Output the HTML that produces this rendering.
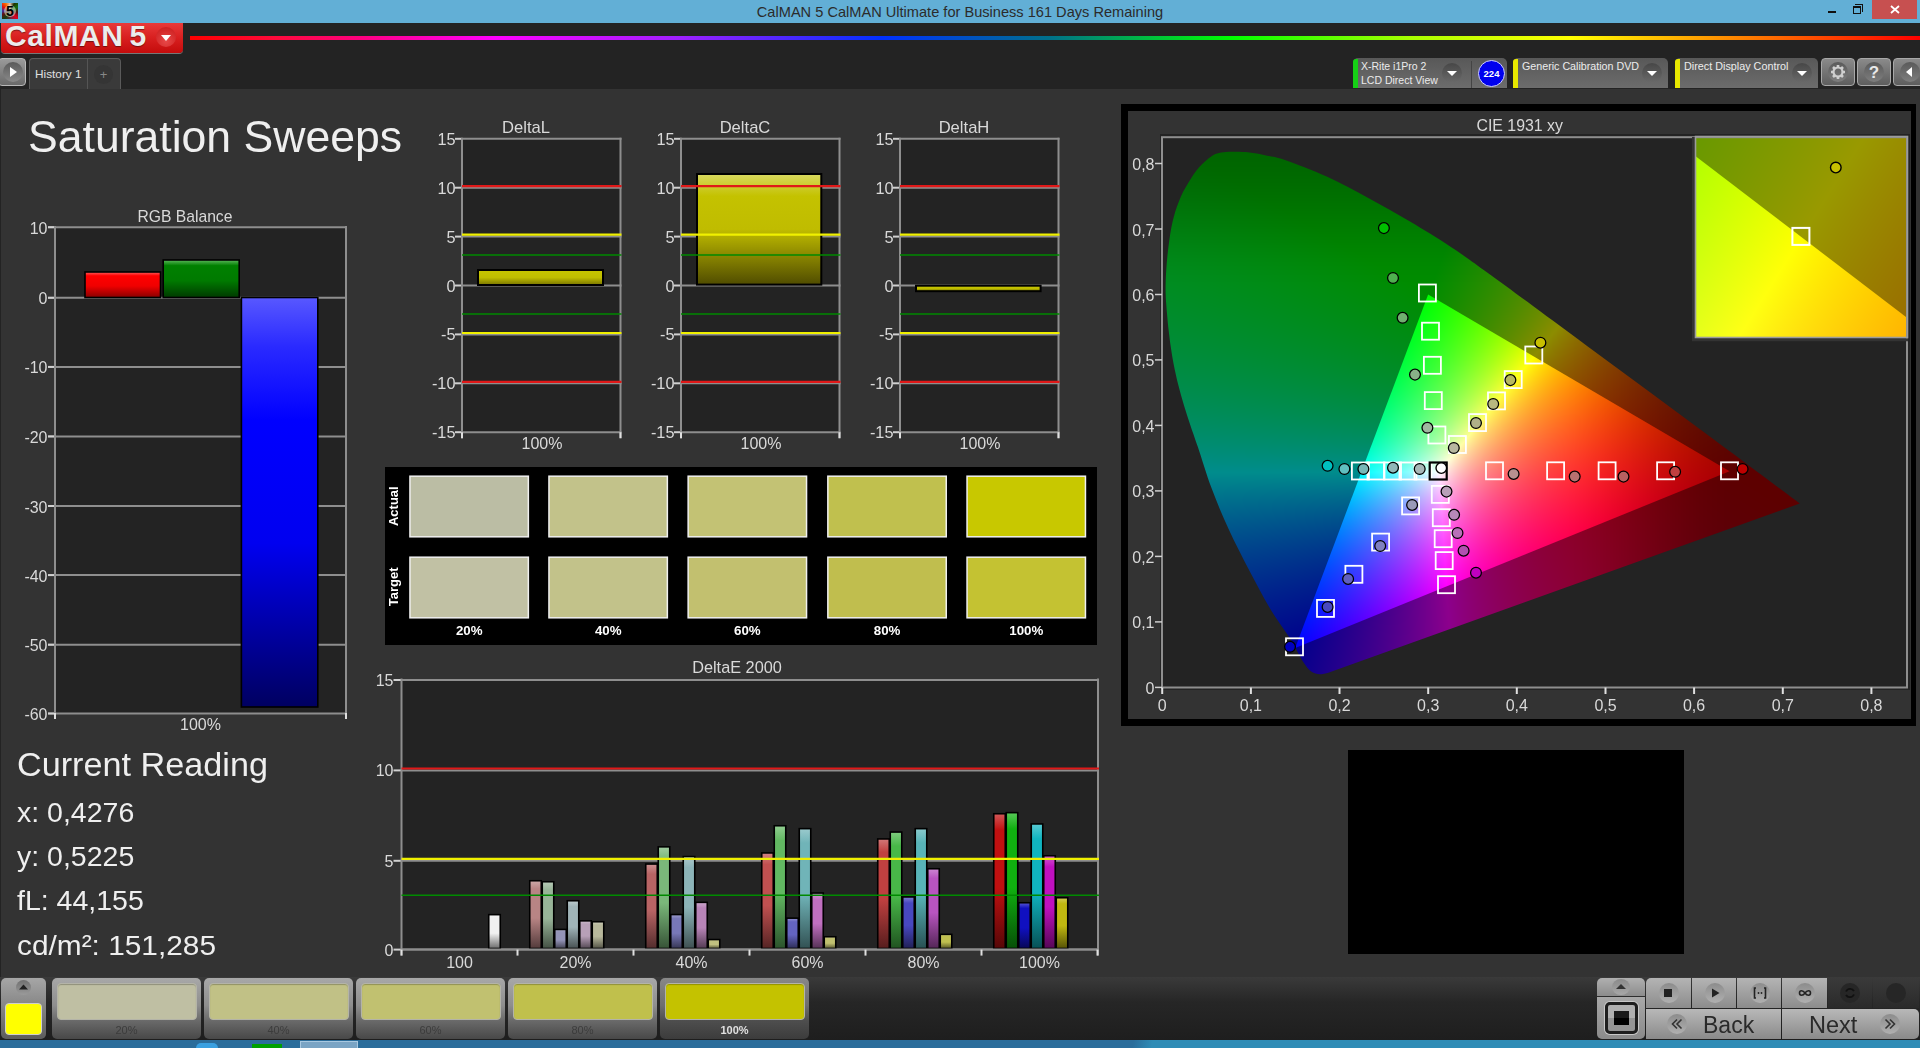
<!DOCTYPE html>
<html><head><meta charset="utf-8"><title>CalMAN 5</title><style>
html,body{margin:0;padding:0;width:1920px;height:1048px;overflow:hidden;background:#333333;font-family:"Liberation Sans",sans-serif;}
.a{position:absolute;box-sizing:border-box;}
svg text{font-family:"Liberation Sans",sans-serif;}
</style></head>
<body>
<div class="a" style="left:0;top:0;width:1920px;height:23px;background:#62afd6"></div>
<div class="a" style="left:2px;top:3px;width:16px;height:16px;background:conic-gradient(#e8c0b0 0deg,#203000 30deg,#107010 60deg,#501010 100deg,#e00020 135deg,#802040 170deg,#104010 215deg,#601010 245deg,#4030a0 270deg,#e01010 300deg,#ff7000 330deg,#e8c0b0 360deg)"></div>
<div class="a" style="left:4px;top:5px;width:12px;height:12px;border-radius:50%;background:rgba(220,240,210,.55)"></div>
<div class="a" style="left:2px;top:2px;width:16px;height:18px;font:bold 14px/18px 'Liberation Sans',sans-serif;color:#000;text-align:center">5</div>
<div class="a" style="left:0;top:0;width:1920px;height:23px;text-align:center;font-size:14.6px;line-height:24px;color:#2b2b2b;padding-left:0px;white-space:nowrap"><span style="position:relative;left:0px">CalMAN 5 CalMAN Ultimate for Business 161 Days Remaining</span></div>
<div class="a" style="left:1828px;top:11px;width:8px;height:2px;background:#111"></div>
<div class="a" style="left:1853px;top:6px;width:8px;height:8px;border:1px solid #111;border-top-width:2px"></div>
<div class="a" style="left:1855px;top:4px;width:8px;height:8px;border-top:1px solid #111;border-right:1px solid #111"></div>
<div class="a" style="left:1872px;top:0;width:45px;height:19px;background:#c75050"></div>
<svg class="a" style="left:1872px;top:0" width="45" height="19"><path d="M19 6 L27 13 M27 6 L19 13" stroke="#fff" stroke-width="1.8"/></svg>
<div class="a" style="left:0;top:23px;width:1920px;height:66px;background:#232323"></div>
<div class="a" style="left:0;top:89px;width:1px;height:888px;background:#232323"></div>
<div class="a" style="left:190px;top:36px;width:1730px;height:4px;background:linear-gradient(90deg,#ff0000 0%,#ff0a3c 5%,#ff0080 9.9%,#ff00ff 17.7%,#a020ff 28.2%,#2a2aff 37%,#0030ff 40%,#00708a 49.7%,#00ff00 60.2%,#a8ff00 70.6%,#ffff00 79.8%,#ff8a00 89%,#ff0000 100%)"></div>
<div class="a" style="left:1px;top:23px;width:182px;height:30px;border-radius:0 0 4px 4px;background:linear-gradient(#e83a3a,#d81f1f 50%,#c40c0c);box-shadow:0 1px 0 #777"></div>
<div class="a" style="left:5px;top:19px;width:150px;height:34px;font:bold 30px/34px 'Liberation Sans',sans-serif;color:#ececec;white-space:nowrap;letter-spacing:0.6px;text-shadow:0 1px 1px rgba(0,0,0,.45)">CalMAN<span style="margin-left:6px">5</span></div>
<div class="a" style="left:156px;top:27px;width:20px;height:20px;border-radius:50%;background:radial-gradient(circle at 50% 70%,#e84848,#c81818)"></div>
<svg class="a" style="left:156px;top:27px" width="20" height="20"><path d="M5 8 L15 8 L10 14 Z" fill="#fff"/></svg>
<div class="a" style="left:-2px;top:58px;width:28px;height:28px;border-radius:4px;background:linear-gradient(#9a9a9a,#6a6a6a);border:1px solid #b8b8b8"></div>
<div class="a" style="left:3px;top:62px;width:20px;height:20px;border-radius:50%;background:linear-gradient(#5a5a5a,#8a8a8a)"></div>
<svg class="a" style="left:3px;top:62px" width="20" height="20"><path d="M7 5 L14 10 L7 15 Z" fill="#fff"/></svg>
<div class="a" style="left:29px;top:58px;width:92px;height:31px;border-radius:4px 4px 0 0;background:#3a3a3a;border:1px solid #5a5a5a;border-bottom:none"></div>
<div class="a" style="left:87px;top:59px;width:1px;height:30px;background:#555"></div>
<div class="a" style="left:35px;top:66px;font-size:11.8px;line-height:16px;color:#e0e0e0;white-space:nowrap">History 1</div>
<div class="a" style="left:94px;top:65px;width:19px;height:19px;border-radius:50%;background:#353535"></div>
<div class="a" style="left:94px;top:65px;width:19px;height:19px;font-size:13px;line-height:20px;text-align:center;color:#888">+</div>
<div class="a" style="left:1353px;top:58px;width:154px;height:30px;border-radius:5px 5px 0 0;background:linear-gradient(#585858,#6c6c6c)"></div>
<div class="a" style="left:1353px;top:59px;width:5px;height:29px;border-radius:3px 0 0 0;background:#16d016"></div>
<div class="a" style="left:1361px;top:59px;font-size:10.5px;line-height:14px;color:#ececec;white-space:nowrap">X-Rite i1Pro 2<br>LCD Direct View</div>
<div class="a" style="left:1442px;top:63px;width:20px;height:20px;border-radius:50%;background:linear-gradient(#474747,#6a6a6a)"></div>
<svg class="a" style="left:1442px;top:63px" width="20" height="20"><path d="M5 8 L15 8 L10 13 Z" fill="#fff"/></svg>
<div class="a" style="left:1471px;top:61px;width:1px;height:27px;background:#444"></div>
<div class="a" style="left:1478px;top:60px;width:27px;height:27px;border-radius:50%;background:#0000ee;border:1.5px solid #d0d0ff"></div>
<div class="a" style="left:1478px;top:60px;width:27px;height:27px;font:bold 9.5px/27px 'Liberation Sans',sans-serif;color:#fff;text-align:center">224</div>
<div class="a" style="left:1513px;top:58px;width:155px;height:30px;border-radius:5px 5px 0 0;background:linear-gradient(#585858,#6c6c6c)"></div>
<div class="a" style="left:1513px;top:59px;width:5px;height:29px;border-radius:3px 0 0 0;background:#e8e800"></div>
<div class="a" style="left:1522px;top:59px;font-size:10.7px;line-height:14px;color:#ececec;white-space:nowrap">Generic Calibration DVD</div>
<div class="a" style="left:1642px;top:63px;width:20px;height:20px;border-radius:50%;background:linear-gradient(#474747,#6a6a6a)"></div>
<svg class="a" style="left:1642px;top:63px" width="20" height="20"><path d="M5 8 L15 8 L10 13 Z" fill="#fff"/></svg>
<div class="a" style="left:1675px;top:58px;width:143px;height:30px;border-radius:5px 5px 0 0;background:linear-gradient(#585858,#6c6c6c)"></div>
<div class="a" style="left:1675px;top:59px;width:5px;height:29px;border-radius:3px 0 0 0;background:#e8e800"></div>
<div class="a" style="left:1684px;top:59px;font-size:10.8px;line-height:14px;color:#ececec;white-space:nowrap">Direct Display Control</div>
<div class="a" style="left:1792px;top:63px;width:20px;height:20px;border-radius:50%;background:linear-gradient(#474747,#6a6a6a)"></div>
<svg class="a" style="left:1792px;top:63px" width="20" height="20"><path d="M5 8 L15 8 L10 13 Z" fill="#fff"/></svg>
<div class="a" style="left:1821px;top:58px;width:34px;height:28px;border-radius:4px;background:linear-gradient(#8a8a8a,#5e5e5e);border:1px solid #a8a8a8"></div>
<div class="a" style="left:1828px;top:62px;width:20px;height:20px;border-radius:50%;background:linear-gradient(#5a5a5a,#7e7e7e)"></div>
<div class="a" style="left:1857px;top:58px;width:34px;height:28px;border-radius:4px;background:linear-gradient(#8a8a8a,#5e5e5e);border:1px solid #a8a8a8"></div>
<div class="a" style="left:1864px;top:62px;width:20px;height:20px;border-radius:50%;background:linear-gradient(#5a5a5a,#7e7e7e)"></div>
<div class="a" style="left:1893px;top:58px;width:34px;height:28px;border-radius:4px;background:linear-gradient(#8a8a8a,#5e5e5e);border:1px solid #a8a8a8"></div>
<div class="a" style="left:1900px;top:62px;width:20px;height:20px;border-radius:50%;background:linear-gradient(#5a5a5a,#7e7e7e)"></div>
<svg class="a" style="left:1828px;top:62px" width="20" height="20"><g fill="none" stroke="#cfcfcf" stroke-width="2.2"><circle cx="10" cy="10" r="4.5"/></g><g stroke="#cfcfcf" stroke-width="2.6"><path d="M10 3v3M10 14v3M3 10h3M14 10h3M5 5l2 2M13 13l2 2M15 5l-2 2M5 15l2-2"/></g></svg>
<div class="a" style="left:1864px;top:62px;width:20px;height:20px;font:bold 17px/21px 'Liberation Sans',sans-serif;color:#e8e8e8;text-align:center">?</div>
<svg class="a" style="left:1900px;top:62px" width="20" height="20"><path d="M12 5 L6 10 L12 15 Z" fill="#fff"/></svg>
<div class="a" style="left:1121px;top:104px;width:795px;height:622px;background:#000"></div>
<div class="a" style="left:1128px;top:111px;width:783px;height:608px;background:#333"></div>
<svg class="a" style="left:1160px;top:134px" width="750" height="556"><defs><linearGradient id="fbh" x1="0" y1="0" x2="0" y2="1"><stop offset="0" stop-color="#006400"/><stop offset="0.45" stop-color="#009040"/><stop offset="0.6" stop-color="#008c8a"/><stop offset="0.8" stop-color="#003a8c"/><stop offset="1" stop-color="#10008a"/></linearGradient><linearGradient id="fbr" x1="0" y1="0" x2="1" y2="0"><stop offset="0" stop-color="#000" stop-opacity="0"/><stop offset="0.5" stop-color="#000" stop-opacity="0"/><stop offset="1" stop-color="#600000" stop-opacity="1"/></linearGradient><radialGradient id="fbt" cx="0.47" cy="0.58" r="0.55"><stop offset="0" stop-color="#fff"/><stop offset="0.35" stop-color="#ffc0e0"/><stop offset="1" stop-color="#ff2060"/></radialGradient></defs><rect width="750" height="556" fill="#232323"/><defs><linearGradient id="fgR" gradientUnits="userSpaceOnUse" x1="569.6" y1="337.3" x2="201.7" y2="337.3"><stop offset="0" stop-color="#ff0000"/><stop offset="0.75" stop-color="#fff"/></linearGradient><linearGradient id="fgG" gradientUnits="userSpaceOnUse" x1="268.2" y1="160.5" x2="352.4" y2="425.7"><stop offset="0" stop-color="#00ff00"/><stop offset="0.75" stop-color="#fff"/></linearGradient><linearGradient id="fgB" gradientUnits="userSpaceOnUse" x1="135.2" y1="514.1" x2="418.9" y2="248.9"><stop offset="0" stop-color="#0000ff"/><stop offset="0.75" stop-color="#fff"/></linearGradient></defs><path d="M639.8 369.4 L340 147.8 L291.7 113.5 L250 87.5 L208.3 64 L166.7 42.6 L125 26 L89.6 18.5 L65.8 18 L51.2 22.6 L39.1 33.3 L28.2 49 L18.8 67.8 L12.5 88.1 L8.6 111.6 L6.3 135 L5.6 158.6 L7.2 182 L13.7 230.4 L24 271.6 L37.8 312.8 L51.5 354 L68.7 395.3 L89.3 436.5 L110 474.4 L130.6 505.3 L142.6 527 L151.2 537.5 L160 540.2 L169 538.5 Z" fill="url(#fbh)"/><path d="M639.8 369.4 L340 147.8 L291.7 113.5 L250 87.5 L208.3 64 L166.7 42.6 L125 26 L89.6 18.5 L65.8 18 L51.2 22.6 L39.1 33.3 L28.2 49 L18.8 67.8 L12.5 88.1 L8.6 111.6 L6.3 135 L5.6 158.6 L7.2 182 L13.7 230.4 L24 271.6 L37.8 312.8 L51.5 354 L68.7 395.3 L89.3 436.5 L110 474.4 L130.6 505.3 L142.6 527 L151.2 537.5 L160 540.2 L169 538.5 Z" fill="url(#fbr)"/><g style="isolation:isolate"><path d="M569.56 337.283 L268.15 160.46 L135.175 514.106 Z" fill="#fff"/><path d="M569.56 337.283 L268.15 160.46 L135.175 514.106 Z" fill="url(#fgR)" style="mix-blend-mode:multiply"/><path d="M569.56 337.283 L268.15 160.46 L135.175 514.106 Z" fill="url(#fgG)" style="mix-blend-mode:multiply"/><path d="M569.56 337.283 L268.15 160.46 L135.175 514.106 Z" fill="url(#fgB)" style="mix-blend-mode:multiply"/></g></svg>
<svg class="a" style="left:1696px;top:137px" width="211" height="200"><defs><linearGradient id="fi1" x1="0" y1="0" x2="1" y2="1"><stop offset="0" stop-color="#b0ff00"/><stop offset="0.5" stop-color="#ffff10"/><stop offset="1" stop-color="#ffb800"/></linearGradient><linearGradient id="fi2" x1="0" y1="0" x2="1" y2="1"><stop offset="0" stop-color="#6a9400"/><stop offset="0.5" stop-color="#909000"/><stop offset="1" stop-color="#9a7000"/></linearGradient></defs><rect width="211" height="200" fill="url(#fi1)"/><path d="M0 0 H211 V180 L0 19 Z" fill="url(#fi2)"/></svg>
<canvas id="cie" class="a" style="left:1160px;top:134px" width="750" height="556"></canvas>
<canvas id="cin" class="a" style="left:1696px;top:137px" width="211" height="200"></canvas>
<svg class="a" style="left:0;top:0" width="1920" height="1048">
<defs><linearGradient id="gR" x1="0" y1="0" x2="0" y2="1"><stop offset="0" stop-color="#ff6060"/><stop offset="0.15" stop-color="#ff0000"/><stop offset="0.55" stop-color="#f00000"/><stop offset="1" stop-color="#880000"/></linearGradient><linearGradient id="gG" x1="0" y1="0" x2="0" y2="1"><stop offset="0" stop-color="#5cb85c"/><stop offset="0.15" stop-color="#008000"/><stop offset="0.55" stop-color="#007a00"/><stop offset="1" stop-color="#003a00"/></linearGradient><linearGradient id="gB" x1="0" y1="0" x2="0" y2="1"><stop offset="0" stop-color="#5858ff"/><stop offset="0.12" stop-color="#2a2aff"/><stop offset="0.3" stop-color="#0000ff"/><stop offset="0.6" stop-color="#0000f0"/><stop offset="1" stop-color="#000060"/></linearGradient><linearGradient id="gY1" x1="0" y1="0" x2="0" y2="1"><stop offset="0" stop-color="#d8d860"/><stop offset="0.2" stop-color="#c4c200"/><stop offset="0.5" stop-color="#c0bc00"/><stop offset="1" stop-color="#504c00"/></linearGradient><linearGradient id="gY2" x1="0" y1="0" x2="0" y2="1"><stop offset="0" stop-color="#c8c600"/><stop offset="0.5" stop-color="#c0be00"/><stop offset="1" stop-color="#787400"/></linearGradient><linearGradient id="e00" x1="0" y1="0" x2="0" y2="1"><stop offset="0" stop-color="#f4f4f4"/><stop offset="0.12" stop-color="#f0f0f0"/><stop offset="0.55" stop-color="#f0f0f0"/><stop offset="1" stop-color="#6c6c6c"/></linearGradient><linearGradient id="e10" x1="0" y1="0" x2="0" y2="1"><stop offset="0" stop-color="#cda9a9"/><stop offset="0.12" stop-color="#b88484"/><stop offset="0.55" stop-color="#b88484"/><stop offset="1" stop-color="#533b3b"/></linearGradient><linearGradient id="e11" x1="0" y1="0" x2="0" y2="1"><stop offset="0" stop-color="#b7cab7"/><stop offset="0.12" stop-color="#98b498"/><stop offset="0.55" stop-color="#98b498"/><stop offset="1" stop-color="#445144"/></linearGradient><linearGradient id="e12" x1="0" y1="0" x2="0" y2="1"><stop offset="0" stop-color="#b4b4cd"/><stop offset="0.12" stop-color="#9494b8"/><stop offset="0.55" stop-color="#9494b8"/><stop offset="1" stop-color="#434353"/></linearGradient><linearGradient id="e13" x1="0" y1="0" x2="0" y2="1"><stop offset="0" stop-color="#bccacd"/><stop offset="0.12" stop-color="#a0b4b8"/><stop offset="0.55" stop-color="#a0b4b8"/><stop offset="1" stop-color="#485153"/></linearGradient><linearGradient id="e14" x1="0" y1="0" x2="0" y2="1"><stop offset="0" stop-color="#cdbccd"/><stop offset="0.12" stop-color="#b8a0b8"/><stop offset="0.55" stop-color="#b8a0b8"/><stop offset="1" stop-color="#534853"/></linearGradient><linearGradient id="e15" x1="0" y1="0" x2="0" y2="1"><stop offset="0" stop-color="#cdcdba"/><stop offset="0.12" stop-color="#b8b89c"/><stop offset="0.55" stop-color="#b8b89c"/><stop offset="1" stop-color="#535346"/></linearGradient><linearGradient id="e20" x1="0" y1="0" x2="0" y2="1"><stop offset="0" stop-color="#cd9292"/><stop offset="0.12" stop-color="#b86464"/><stop offset="0.55" stop-color="#b86464"/><stop offset="1" stop-color="#532d2d"/></linearGradient><linearGradient id="e21" x1="0" y1="0" x2="0" y2="1"><stop offset="0" stop-color="#a2cda2"/><stop offset="0.12" stop-color="#7ab87a"/><stop offset="0.55" stop-color="#7ab87a"/><stop offset="1" stop-color="#375337"/></linearGradient><linearGradient id="e22" x1="0" y1="0" x2="0" y2="1"><stop offset="0" stop-color="#a0a0cd"/><stop offset="0.12" stop-color="#7878b8"/><stop offset="0.55" stop-color="#7878b8"/><stop offset="1" stop-color="#363653"/></linearGradient><linearGradient id="e23" x1="0" y1="0" x2="0" y2="1"><stop offset="0" stop-color="#aecacd"/><stop offset="0.12" stop-color="#8cb4b8"/><stop offset="0.55" stop-color="#8cb4b8"/><stop offset="1" stop-color="#3f5153"/></linearGradient><linearGradient id="e24" x1="0" y1="0" x2="0" y2="1"><stop offset="0" stop-color="#cda9cd"/><stop offset="0.12" stop-color="#b884b8"/><stop offset="0.55" stop-color="#b884b8"/><stop offset="1" stop-color="#533b53"/></linearGradient><linearGradient id="e25" x1="0" y1="0" x2="0" y2="1"><stop offset="0" stop-color="#d3d3a6"/><stop offset="0.12" stop-color="#c0c080"/><stop offset="0.55" stop-color="#c0c080"/><stop offset="1" stop-color="#56563a"/></linearGradient><linearGradient id="e30" x1="0" y1="0" x2="0" y2="1"><stop offset="0" stop-color="#d38484"/><stop offset="0.12" stop-color="#c05050"/><stop offset="0.55" stop-color="#c05050"/><stop offset="1" stop-color="#562424"/></linearGradient><linearGradient id="e31" x1="0" y1="0" x2="0" y2="1"><stop offset="0" stop-color="#91cd91"/><stop offset="0.12" stop-color="#62b862"/><stop offset="0.55" stop-color="#62b862"/><stop offset="1" stop-color="#2c532c"/></linearGradient><linearGradient id="e32" x1="0" y1="0" x2="0" y2="1"><stop offset="0" stop-color="#9292d3"/><stop offset="0.12" stop-color="#6464c0"/><stop offset="0.55" stop-color="#6464c0"/><stop offset="1" stop-color="#2d2d56"/></linearGradient><linearGradient id="e33" x1="0" y1="0" x2="0" y2="1"><stop offset="0" stop-color="#9bcacd"/><stop offset="0.12" stop-color="#70b4b8"/><stop offset="0.55" stop-color="#70b4b8"/><stop offset="1" stop-color="#325153"/></linearGradient><linearGradient id="e34" x1="0" y1="0" x2="0" y2="1"><stop offset="0" stop-color="#d39bd3"/><stop offset="0.12" stop-color="#c070c0"/><stop offset="0.55" stop-color="#c070c0"/><stop offset="1" stop-color="#563256"/></linearGradient><linearGradient id="e35" x1="0" y1="0" x2="0" y2="1"><stop offset="0" stop-color="#d3d39b"/><stop offset="0.12" stop-color="#c0c070"/><stop offset="0.55" stop-color="#c0c070"/><stop offset="1" stop-color="#565632"/></linearGradient><linearGradient id="e40" x1="0" y1="0" x2="0" y2="1"><stop offset="0" stop-color="#d37979"/><stop offset="0.12" stop-color="#c04040"/><stop offset="0.55" stop-color="#c04040"/><stop offset="1" stop-color="#561d1d"/></linearGradient><linearGradient id="e41" x1="0" y1="0" x2="0" y2="1"><stop offset="0" stop-color="#7fcd7f"/><stop offset="0.12" stop-color="#48b848"/><stop offset="0.55" stop-color="#48b848"/><stop offset="1" stop-color="#205320"/></linearGradient><linearGradient id="e42" x1="0" y1="0" x2="0" y2="1"><stop offset="0" stop-color="#7f7fd3"/><stop offset="0.12" stop-color="#4848c0"/><stop offset="0.55" stop-color="#4848c0"/><stop offset="1" stop-color="#202056"/></linearGradient><linearGradient id="e43" x1="0" y1="0" x2="0" y2="1"><stop offset="0" stop-color="#8acacd"/><stop offset="0.12" stop-color="#58b4b8"/><stop offset="0.55" stop-color="#58b4b8"/><stop offset="1" stop-color="#285153"/></linearGradient><linearGradient id="e44" x1="0" y1="0" x2="0" y2="1"><stop offset="0" stop-color="#cd87d3"/><stop offset="0.12" stop-color="#b854c0"/><stop offset="0.55" stop-color="#b854c0"/><stop offset="1" stop-color="#532656"/></linearGradient><linearGradient id="e45" x1="0" y1="0" x2="0" y2="1"><stop offset="0" stop-color="#d3d384"/><stop offset="0.12" stop-color="#c0c050"/><stop offset="0.55" stop-color="#c0c050"/><stop offset="1" stop-color="#565624"/></linearGradient><linearGradient id="e50" x1="0" y1="0" x2="0" y2="1"><stop offset="0" stop-color="#d35858"/><stop offset="0.12" stop-color="#c01010"/><stop offset="0.55" stop-color="#c01010"/><stop offset="1" stop-color="#560707"/></linearGradient><linearGradient id="e51" x1="0" y1="0" x2="0" y2="1"><stop offset="0" stop-color="#58c858"/><stop offset="0.12" stop-color="#10b010"/><stop offset="0.55" stop-color="#10b010"/><stop offset="1" stop-color="#074f07"/></linearGradient><linearGradient id="e52" x1="0" y1="0" x2="0" y2="1"><stop offset="0" stop-color="#5858d3"/><stop offset="0.12" stop-color="#1010c0"/><stop offset="0.55" stop-color="#1010c0"/><stop offset="1" stop-color="#070756"/></linearGradient><linearGradient id="e53" x1="0" y1="0" x2="0" y2="1"><stop offset="0" stop-color="#58cad3"/><stop offset="0.12" stop-color="#10b4c0"/><stop offset="0.55" stop-color="#10b4c0"/><stop offset="1" stop-color="#075156"/></linearGradient><linearGradient id="e54" x1="0" y1="0" x2="0" y2="1"><stop offset="0" stop-color="#d358d3"/><stop offset="0.12" stop-color="#c010c0"/><stop offset="0.55" stop-color="#c010c0"/><stop offset="1" stop-color="#560756"/></linearGradient><linearGradient id="e55" x1="0" y1="0" x2="0" y2="1"><stop offset="0" stop-color="#d3cd58"/><stop offset="0.12" stop-color="#c0b810"/><stop offset="0.55" stop-color="#c0b810"/><stop offset="1" stop-color="#565307"/></linearGradient></defs>
<text x="28" y="152" font-size="44" fill="#efefef" textLength="374" lengthAdjust="spacingAndGlyphs">Saturation Sweeps</text>
<text x="17" y="776" font-size="33" fill="#efefef" textLength="251" lengthAdjust="spacingAndGlyphs">Current Reading</text>
<text x="17" y="822.0" font-size="28.5" fill="#efefef">x: 0,4276</text>
<text x="17" y="866.2" font-size="28.5" fill="#efefef">y: 0,5225</text>
<text x="17" y="910.4" font-size="28.5" fill="#efefef">fL: 44,155</text>
<text x="17" y="954.6" font-size="28.5" fill="#efefef" textLength="199" lengthAdjust="spacingAndGlyphs">cd/m²: 151,285</text>
<rect x="55" y="227" width="291" height="486" fill="#232323"/>
<line x1="48" y1="227.2" x2="347" y2="227.2" stroke="#8e8e8e" stroke-width="2"/>
<line x1="48" y1="227.2" x2="55" y2="227.2" stroke="#d0d0d0" stroke-width="2"/>
<text x="47.5" y="233.7" font-size="16" fill="#d9d9d9" text-anchor="end">10</text>
<line x1="48" y1="297.8" x2="347" y2="297.8" stroke="#8e8e8e" stroke-width="2"/>
<line x1="48" y1="297.8" x2="55" y2="297.8" stroke="#d0d0d0" stroke-width="2"/>
<text x="47.5" y="304.3" font-size="16" fill="#d9d9d9" text-anchor="end">0</text>
<line x1="48" y1="366.9" x2="347" y2="366.9" stroke="#8e8e8e" stroke-width="2"/>
<line x1="48" y1="366.9" x2="55" y2="366.9" stroke="#d0d0d0" stroke-width="2"/>
<text x="47.5" y="373.4" font-size="16" fill="#d9d9d9" text-anchor="end">-10</text>
<line x1="48" y1="436.4" x2="347" y2="436.4" stroke="#8e8e8e" stroke-width="2"/>
<line x1="48" y1="436.4" x2="55" y2="436.4" stroke="#d0d0d0" stroke-width="2"/>
<text x="47.5" y="442.9" font-size="16" fill="#d9d9d9" text-anchor="end">-20</text>
<line x1="48" y1="506.0" x2="347" y2="506.0" stroke="#8e8e8e" stroke-width="2"/>
<line x1="48" y1="506.0" x2="55" y2="506.0" stroke="#d0d0d0" stroke-width="2"/>
<text x="47.5" y="512.5" font-size="16" fill="#d9d9d9" text-anchor="end">-30</text>
<line x1="48" y1="575.1" x2="347" y2="575.1" stroke="#8e8e8e" stroke-width="2"/>
<line x1="48" y1="575.1" x2="55" y2="575.1" stroke="#d0d0d0" stroke-width="2"/>
<text x="47.5" y="581.6" font-size="16" fill="#d9d9d9" text-anchor="end">-40</text>
<line x1="48" y1="644.7" x2="347" y2="644.7" stroke="#8e8e8e" stroke-width="2"/>
<line x1="48" y1="644.7" x2="55" y2="644.7" stroke="#d0d0d0" stroke-width="2"/>
<text x="47.5" y="651.2" font-size="16" fill="#d9d9d9" text-anchor="end">-50</text>
<line x1="48" y1="713.5" x2="347" y2="713.5" stroke="#8e8e8e" stroke-width="2"/>
<line x1="48" y1="713.5" x2="55" y2="713.5" stroke="#d0d0d0" stroke-width="2"/>
<text x="47.5" y="720.0" font-size="16" fill="#d9d9d9" text-anchor="end">-60</text>
<line x1="55" y1="226" x2="55" y2="719" stroke="#8e8e8e" stroke-width="2"/>
<line x1="346" y1="226" x2="346" y2="719" stroke="#8e8e8e" stroke-width="2"/>
<line x1="55" y1="713" x2="55" y2="719" stroke="#e0e0e0" stroke-width="2"/>
<line x1="346" y1="713" x2="346" y2="719" stroke="#e0e0e0" stroke-width="2"/>
<text x="184.9" y="222" font-size="15.7" fill="#d9d9d9" text-anchor="middle">RGB Balance</text>
<text x="200.5" y="730" font-size="16" fill="#d9d9d9" text-anchor="middle">100%</text>
<rect x="85" y="272" width="75.5" height="25.5" fill="url(#gR)" stroke="#000" stroke-width="1.6"/>
<rect x="163.2" y="260" width="76" height="37.5" fill="url(#gG)" stroke="#000" stroke-width="1.6"/>
<rect x="241.4" y="297.5" width="76.4" height="409.5" fill="url(#gB)" stroke="#000" stroke-width="1.6"/>
<rect x="462" y="138.8" width="158.5" height="293.4" fill="#232323"/>
<line x1="462" y1="138.8" x2="621.5" y2="138.8" stroke="#8e8e8e" stroke-width="2"/>
<line x1="455" y1="138.8" x2="462" y2="138.8" stroke="#d0d0d0" stroke-width="2"/>
<text x="455.5" y="144.8" font-size="16.3" fill="#d9d9d9" text-anchor="end">15</text>
<line x1="462" y1="187.7" x2="621.5" y2="187.7" stroke="#8e8e8e" stroke-width="2"/>
<line x1="455" y1="187.7" x2="462" y2="187.7" stroke="#d0d0d0" stroke-width="2"/>
<text x="455.5" y="193.7" font-size="16.3" fill="#d9d9d9" text-anchor="end">10</text>
<line x1="462" y1="236.6" x2="621.5" y2="236.6" stroke="#8e8e8e" stroke-width="2"/>
<line x1="455" y1="236.6" x2="462" y2="236.6" stroke="#d0d0d0" stroke-width="2"/>
<text x="455.5" y="242.6" font-size="16.3" fill="#d9d9d9" text-anchor="end">5</text>
<line x1="462" y1="285.5" x2="621.5" y2="285.5" stroke="#8e8e8e" stroke-width="2"/>
<line x1="455" y1="285.5" x2="462" y2="285.5" stroke="#d0d0d0" stroke-width="2"/>
<text x="455.5" y="291.5" font-size="16.3" fill="#d9d9d9" text-anchor="end">0</text>
<line x1="462" y1="334.4" x2="621.5" y2="334.4" stroke="#8e8e8e" stroke-width="2"/>
<line x1="455" y1="334.4" x2="462" y2="334.4" stroke="#d0d0d0" stroke-width="2"/>
<text x="455.5" y="340.4" font-size="16.3" fill="#d9d9d9" text-anchor="end">-5</text>
<line x1="462" y1="383.3" x2="621.5" y2="383.3" stroke="#8e8e8e" stroke-width="2"/>
<line x1="455" y1="383.3" x2="462" y2="383.3" stroke="#d0d0d0" stroke-width="2"/>
<text x="455.5" y="389.3" font-size="16.3" fill="#d9d9d9" text-anchor="end">-10</text>
<line x1="462" y1="432.2" x2="621.5" y2="432.2" stroke="#8e8e8e" stroke-width="2"/>
<line x1="455" y1="432.2" x2="462" y2="432.2" stroke="#d0d0d0" stroke-width="2"/>
<text x="455.5" y="438.2" font-size="16.3" fill="#d9d9d9" text-anchor="end">-15</text>
<line x1="462" y1="137.8" x2="462" y2="438.2" stroke="#8e8e8e" stroke-width="2"/>
<line x1="620.5" y1="137.8" x2="620.5" y2="438.2" stroke="#8e8e8e" stroke-width="2"/>
<line x1="462" y1="432.2" x2="462" y2="438.2" stroke="#e0e0e0" stroke-width="2"/>
<line x1="620.5" y1="432.2" x2="620.5" y2="438.2" stroke="#e0e0e0" stroke-width="2"/>
<rect x="478" y="270" width="125.0" height="15.0" fill="url(#gY2)" stroke="#000" stroke-width="2"/>
<line x1="462" y1="186.1" x2="621.5" y2="186.1" stroke="#e01818" stroke-width="2.2"/>
<line x1="462" y1="381.9" x2="621.5" y2="381.9" stroke="#e01818" stroke-width="2.2"/>
<line x1="462" y1="234.6" x2="621.5" y2="234.6" stroke="#f0f000" stroke-width="2.2"/>
<line x1="462" y1="333.0" x2="621.5" y2="333.0" stroke="#f0f000" stroke-width="2.2"/>
<line x1="462" y1="255.0" x2="621.5" y2="255.0" stroke="#008a00" stroke-width="1.6"/>
<line x1="462" y1="314.0" x2="621.5" y2="314.0" stroke="#008a00" stroke-width="1.6"/>
<text x="526" y="133" font-size="16.6" fill="#d9d9d9" text-anchor="middle">DeltaL</text>
<text x="542" y="449" font-size="16" fill="#d9d9d9" text-anchor="middle">100%</text>
<rect x="681" y="138.8" width="158.5" height="293.4" fill="#232323"/>
<line x1="681" y1="138.8" x2="840.5" y2="138.8" stroke="#8e8e8e" stroke-width="2"/>
<line x1="674" y1="138.8" x2="681" y2="138.8" stroke="#d0d0d0" stroke-width="2"/>
<text x="674.5" y="144.8" font-size="16.3" fill="#d9d9d9" text-anchor="end">15</text>
<line x1="681" y1="187.7" x2="840.5" y2="187.7" stroke="#8e8e8e" stroke-width="2"/>
<line x1="674" y1="187.7" x2="681" y2="187.7" stroke="#d0d0d0" stroke-width="2"/>
<text x="674.5" y="193.7" font-size="16.3" fill="#d9d9d9" text-anchor="end">10</text>
<line x1="681" y1="236.6" x2="840.5" y2="236.6" stroke="#8e8e8e" stroke-width="2"/>
<line x1="674" y1="236.6" x2="681" y2="236.6" stroke="#d0d0d0" stroke-width="2"/>
<text x="674.5" y="242.6" font-size="16.3" fill="#d9d9d9" text-anchor="end">5</text>
<line x1="681" y1="285.5" x2="840.5" y2="285.5" stroke="#8e8e8e" stroke-width="2"/>
<line x1="674" y1="285.5" x2="681" y2="285.5" stroke="#d0d0d0" stroke-width="2"/>
<text x="674.5" y="291.5" font-size="16.3" fill="#d9d9d9" text-anchor="end">0</text>
<line x1="681" y1="334.4" x2="840.5" y2="334.4" stroke="#8e8e8e" stroke-width="2"/>
<line x1="674" y1="334.4" x2="681" y2="334.4" stroke="#d0d0d0" stroke-width="2"/>
<text x="674.5" y="340.4" font-size="16.3" fill="#d9d9d9" text-anchor="end">-5</text>
<line x1="681" y1="383.3" x2="840.5" y2="383.3" stroke="#8e8e8e" stroke-width="2"/>
<line x1="674" y1="383.3" x2="681" y2="383.3" stroke="#d0d0d0" stroke-width="2"/>
<text x="674.5" y="389.3" font-size="16.3" fill="#d9d9d9" text-anchor="end">-10</text>
<line x1="681" y1="432.2" x2="840.5" y2="432.2" stroke="#8e8e8e" stroke-width="2"/>
<line x1="674" y1="432.2" x2="681" y2="432.2" stroke="#d0d0d0" stroke-width="2"/>
<text x="674.5" y="438.2" font-size="16.3" fill="#d9d9d9" text-anchor="end">-15</text>
<line x1="681" y1="137.8" x2="681" y2="438.2" stroke="#8e8e8e" stroke-width="2"/>
<line x1="839.5" y1="137.8" x2="839.5" y2="438.2" stroke="#8e8e8e" stroke-width="2"/>
<line x1="681" y1="432.2" x2="681" y2="438.2" stroke="#e0e0e0" stroke-width="2"/>
<line x1="839.5" y1="432.2" x2="839.5" y2="438.2" stroke="#e0e0e0" stroke-width="2"/>
<rect x="697" y="174" width="124.3" height="110.6" fill="url(#gY1)" stroke="#000" stroke-width="2"/>
<line x1="681" y1="186.1" x2="840.5" y2="186.1" stroke="#e01818" stroke-width="2.2"/>
<line x1="681" y1="381.9" x2="840.5" y2="381.9" stroke="#e01818" stroke-width="2.2"/>
<line x1="681" y1="234.6" x2="840.5" y2="234.6" stroke="#f0f000" stroke-width="2.2"/>
<line x1="681" y1="333.0" x2="840.5" y2="333.0" stroke="#f0f000" stroke-width="2.2"/>
<line x1="681" y1="255.0" x2="840.5" y2="255.0" stroke="#008a00" stroke-width="1.6"/>
<line x1="681" y1="314.0" x2="840.5" y2="314.0" stroke="#008a00" stroke-width="1.6"/>
<text x="745" y="133" font-size="16.6" fill="#d9d9d9" text-anchor="middle">DeltaC</text>
<text x="761" y="449" font-size="16" fill="#d9d9d9" text-anchor="middle">100%</text>
<rect x="900" y="138.8" width="158.5" height="293.4" fill="#232323"/>
<line x1="900" y1="138.8" x2="1059.5" y2="138.8" stroke="#8e8e8e" stroke-width="2"/>
<line x1="893" y1="138.8" x2="900" y2="138.8" stroke="#d0d0d0" stroke-width="2"/>
<text x="893.5" y="144.8" font-size="16.3" fill="#d9d9d9" text-anchor="end">15</text>
<line x1="900" y1="187.7" x2="1059.5" y2="187.7" stroke="#8e8e8e" stroke-width="2"/>
<line x1="893" y1="187.7" x2="900" y2="187.7" stroke="#d0d0d0" stroke-width="2"/>
<text x="893.5" y="193.7" font-size="16.3" fill="#d9d9d9" text-anchor="end">10</text>
<line x1="900" y1="236.6" x2="1059.5" y2="236.6" stroke="#8e8e8e" stroke-width="2"/>
<line x1="893" y1="236.6" x2="900" y2="236.6" stroke="#d0d0d0" stroke-width="2"/>
<text x="893.5" y="242.6" font-size="16.3" fill="#d9d9d9" text-anchor="end">5</text>
<line x1="900" y1="285.5" x2="1059.5" y2="285.5" stroke="#8e8e8e" stroke-width="2"/>
<line x1="893" y1="285.5" x2="900" y2="285.5" stroke="#d0d0d0" stroke-width="2"/>
<text x="893.5" y="291.5" font-size="16.3" fill="#d9d9d9" text-anchor="end">0</text>
<line x1="900" y1="334.4" x2="1059.5" y2="334.4" stroke="#8e8e8e" stroke-width="2"/>
<line x1="893" y1="334.4" x2="900" y2="334.4" stroke="#d0d0d0" stroke-width="2"/>
<text x="893.5" y="340.4" font-size="16.3" fill="#d9d9d9" text-anchor="end">-5</text>
<line x1="900" y1="383.3" x2="1059.5" y2="383.3" stroke="#8e8e8e" stroke-width="2"/>
<line x1="893" y1="383.3" x2="900" y2="383.3" stroke="#d0d0d0" stroke-width="2"/>
<text x="893.5" y="389.3" font-size="16.3" fill="#d9d9d9" text-anchor="end">-10</text>
<line x1="900" y1="432.2" x2="1059.5" y2="432.2" stroke="#8e8e8e" stroke-width="2"/>
<line x1="893" y1="432.2" x2="900" y2="432.2" stroke="#d0d0d0" stroke-width="2"/>
<text x="893.5" y="438.2" font-size="16.3" fill="#d9d9d9" text-anchor="end">-15</text>
<line x1="900" y1="137.8" x2="900" y2="438.2" stroke="#8e8e8e" stroke-width="2"/>
<line x1="1058.5" y1="137.8" x2="1058.5" y2="438.2" stroke="#8e8e8e" stroke-width="2"/>
<line x1="900" y1="432.2" x2="900" y2="438.2" stroke="#e0e0e0" stroke-width="2"/>
<line x1="1058.5" y1="432.2" x2="1058.5" y2="438.2" stroke="#e0e0e0" stroke-width="2"/>
<rect x="916" y="285.7" width="124.6" height="5.5" fill="url(#gY2)" stroke="#000" stroke-width="2"/>
<line x1="900" y1="186.1" x2="1059.5" y2="186.1" stroke="#e01818" stroke-width="2.2"/>
<line x1="900" y1="381.9" x2="1059.5" y2="381.9" stroke="#e01818" stroke-width="2.2"/>
<line x1="900" y1="234.6" x2="1059.5" y2="234.6" stroke="#f0f000" stroke-width="2.2"/>
<line x1="900" y1="333.0" x2="1059.5" y2="333.0" stroke="#f0f000" stroke-width="2.2"/>
<line x1="900" y1="255.0" x2="1059.5" y2="255.0" stroke="#008a00" stroke-width="1.6"/>
<line x1="900" y1="314.0" x2="1059.5" y2="314.0" stroke="#008a00" stroke-width="1.6"/>
<text x="964" y="133" font-size="16.6" fill="#d9d9d9" text-anchor="middle">DeltaH</text>
<text x="980" y="449" font-size="16" fill="#d9d9d9" text-anchor="middle">100%</text>
<rect x="385" y="467" width="712" height="178" fill="#000"/>
<rect x="409.95" y="476.2" width="118.4" height="60.6" fill="#bbbda4" stroke="#f0f0f0" stroke-width="1.5"/>
<rect x="409.95" y="557.2" width="118.4" height="60.6" fill="#c1c1a4" stroke="#f0f0f0" stroke-width="1.5"/>
<text x="469.2" y="635" font-size="13.3" font-weight="bold" fill="#fff" text-anchor="middle">20%</text>
<rect x="548.95" y="476.2" width="118.4" height="60.6" fill="#c2c28a" stroke="#f0f0f0" stroke-width="1.5"/>
<rect x="548.95" y="557.2" width="118.4" height="60.6" fill="#c2c28a" stroke="#f0f0f0" stroke-width="1.5"/>
<text x="608.2" y="635" font-size="13.3" font-weight="bold" fill="#fff" text-anchor="middle">40%</text>
<rect x="688.15" y="476.2" width="118.4" height="60.6" fill="#c3c274" stroke="#f0f0f0" stroke-width="1.5"/>
<rect x="688.15" y="557.2" width="118.4" height="60.6" fill="#c2c06f" stroke="#f0f0f0" stroke-width="1.5"/>
<text x="747.4" y="635" font-size="13.3" font-weight="bold" fill="#fff" text-anchor="middle">60%</text>
<rect x="827.85" y="476.2" width="118.4" height="60.6" fill="#c0c04e" stroke="#f0f0f0" stroke-width="1.5"/>
<rect x="827.85" y="557.2" width="118.4" height="60.6" fill="#c0be4e" stroke="#f0f0f0" stroke-width="1.5"/>
<text x="887.1" y="635" font-size="13.3" font-weight="bold" fill="#fff" text-anchor="middle">80%</text>
<rect x="967.05" y="476.2" width="118.4" height="60.6" fill="#c8c800" stroke="#f0f0f0" stroke-width="1.5"/>
<rect x="967.05" y="557.2" width="118.4" height="60.6" fill="#c4c232" stroke="#f0f0f0" stroke-width="1.5"/>
<text x="1026.3" y="635" font-size="13.3" font-weight="bold" fill="#fff" text-anchor="middle">100%</text>
<text transform="translate(398,506.2) rotate(-90)" font-size="13" font-weight="bold" fill="#fff" text-anchor="middle">Actual</text>
<text transform="translate(398,586.9) rotate(-90)" font-size="13" font-weight="bold" fill="#fff" text-anchor="middle">Target</text>
<rect x="401.5" y="679.6" width="696.5" height="270.0" fill="#232323"/>
<line x1="401.5" y1="680.0" x2="1099" y2="680.0" stroke="#8e8e8e" stroke-width="2"/>
<line x1="393.5" y1="680.0" x2="401.5" y2="680.0" stroke="#d0d0d0" stroke-width="2"/>
<text x="393.5" y="686.0" font-size="16" fill="#d9d9d9" text-anchor="end">15</text>
<line x1="401.5" y1="770.4" x2="1099" y2="770.4" stroke="#8e8e8e" stroke-width="2"/>
<line x1="393.5" y1="770.4" x2="401.5" y2="770.4" stroke="#d0d0d0" stroke-width="2"/>
<text x="393.5" y="776.4" font-size="16" fill="#d9d9d9" text-anchor="end">10</text>
<line x1="401.5" y1="860.8" x2="1099" y2="860.8" stroke="#8e8e8e" stroke-width="2"/>
<line x1="393.5" y1="860.8" x2="401.5" y2="860.8" stroke="#d0d0d0" stroke-width="2"/>
<text x="393.5" y="866.8" font-size="16" fill="#d9d9d9" text-anchor="end">5</text>
<line x1="401.5" y1="949.6" x2="1099" y2="949.6" stroke="#8e8e8e" stroke-width="2"/>
<line x1="393.5" y1="949.6" x2="401.5" y2="949.6" stroke="#d0d0d0" stroke-width="2"/>
<text x="393.5" y="955.6" font-size="16" fill="#d9d9d9" text-anchor="end">0</text>
<line x1="401.5" y1="678.6" x2="401.5" y2="955.6" stroke="#8e8e8e" stroke-width="2"/>
<line x1="1098" y1="678.6" x2="1098" y2="955.6" stroke="#8e8e8e" stroke-width="2"/>
<rect x="488.75" y="914.65" width="11.5" height="33.85" fill="url(#e00)" stroke="#000" stroke-width="1.6"/>
<rect x="529.75" y="880.75" width="11.5" height="67.75" fill="url(#e10)" stroke="#000" stroke-width="1.6"/>
<rect x="542.25" y="881.75" width="11.5" height="66.75" fill="url(#e11)" stroke="#000" stroke-width="1.6"/>
<rect x="554.75" y="929.45" width="11.5" height="19.05" fill="url(#e12)" stroke="#000" stroke-width="1.6"/>
<rect x="567.25" y="900.75" width="11.5" height="47.75" fill="url(#e13)" stroke="#000" stroke-width="1.6"/>
<rect x="579.75" y="920.85" width="11.5" height="27.65" fill="url(#e14)" stroke="#000" stroke-width="1.6"/>
<rect x="592.25" y="921.75" width="11.5" height="26.75" fill="url(#e15)" stroke="#000" stroke-width="1.6"/>
<rect x="645.75" y="864.05" width="11.5" height="84.45" fill="url(#e20)" stroke="#000" stroke-width="1.6"/>
<rect x="658.25" y="846.85" width="11.5" height="101.65" fill="url(#e21)" stroke="#000" stroke-width="1.6"/>
<rect x="670.75" y="914.55" width="11.5" height="33.95" fill="url(#e22)" stroke="#000" stroke-width="1.6"/>
<rect x="683.25" y="856.55" width="11.5" height="91.95" fill="url(#e23)" stroke="#000" stroke-width="1.6"/>
<rect x="695.75" y="902.35" width="11.5" height="46.15" fill="url(#e24)" stroke="#000" stroke-width="1.6"/>
<rect x="708.25" y="939.55" width="11.5" height="8.95" fill="url(#e25)" stroke="#000" stroke-width="1.6"/>
<rect x="761.75" y="852.95" width="11.5" height="95.55" fill="url(#e30)" stroke="#000" stroke-width="1.6"/>
<rect x="774.25" y="825.75" width="11.5" height="122.75" fill="url(#e31)" stroke="#000" stroke-width="1.6"/>
<rect x="786.75" y="918.15" width="11.5" height="30.35" fill="url(#e32)" stroke="#000" stroke-width="1.6"/>
<rect x="799.25" y="828.65" width="11.5" height="119.85" fill="url(#e33)" stroke="#000" stroke-width="1.6"/>
<rect x="811.75" y="893.05" width="11.5" height="55.45" fill="url(#e34)" stroke="#000" stroke-width="1.6"/>
<rect x="824.25" y="936.75" width="11.5" height="11.75" fill="url(#e35)" stroke="#000" stroke-width="1.6"/>
<rect x="877.75" y="838.95" width="11.5" height="109.55" fill="url(#e40)" stroke="#000" stroke-width="1.6"/>
<rect x="890.25" y="832.05" width="11.5" height="116.45" fill="url(#e41)" stroke="#000" stroke-width="1.6"/>
<rect x="902.75" y="896.95" width="11.5" height="51.55" fill="url(#e42)" stroke="#000" stroke-width="1.6"/>
<rect x="915.25" y="828.65" width="11.5" height="119.85" fill="url(#e43)" stroke="#000" stroke-width="1.6"/>
<rect x="927.75" y="868.75" width="11.5" height="79.75" fill="url(#e44)" stroke="#000" stroke-width="1.6"/>
<rect x="940.25" y="934.35" width="11.5" height="14.15" fill="url(#e45)" stroke="#000" stroke-width="1.6"/>
<rect x="993.75" y="813.75" width="11.5" height="134.75" fill="url(#e50)" stroke="#000" stroke-width="1.6"/>
<rect x="1006.25" y="812.65" width="11.5" height="135.85" fill="url(#e51)" stroke="#000" stroke-width="1.6"/>
<rect x="1018.75" y="902.75" width="11.5" height="45.75" fill="url(#e52)" stroke="#000" stroke-width="1.6"/>
<rect x="1031.25" y="823.95" width="11.5" height="124.55" fill="url(#e53)" stroke="#000" stroke-width="1.6"/>
<rect x="1043.75" y="855.75" width="11.5" height="92.75" fill="url(#e54)" stroke="#000" stroke-width="1.6"/>
<rect x="1056.25" y="897.75" width="11.5" height="50.75" fill="url(#e55)" stroke="#000" stroke-width="1.6"/>
<line x1="401.5" y1="949.6" x2="1099" y2="949.6" stroke="#8e8e8e" stroke-width="2"/>
<line x1="401.5" y1="949.6" x2="401.5" y2="955.6" stroke="#e0e0e0" stroke-width="2"/>
<line x1="517.5" y1="949.6" x2="517.5" y2="955.6" stroke="#e0e0e0" stroke-width="2"/>
<line x1="633.5" y1="949.6" x2="633.5" y2="955.6" stroke="#e0e0e0" stroke-width="2"/>
<line x1="749.5" y1="949.6" x2="749.5" y2="955.6" stroke="#e0e0e0" stroke-width="2"/>
<line x1="865.5" y1="949.6" x2="865.5" y2="955.6" stroke="#e0e0e0" stroke-width="2"/>
<line x1="981.5" y1="949.6" x2="981.5" y2="955.6" stroke="#e0e0e0" stroke-width="2"/>
<line x1="1097.5" y1="949.6" x2="1097.5" y2="955.6" stroke="#e0e0e0" stroke-width="2"/>
<line x1="401.5" y1="768.5" x2="1099" y2="768.5" stroke="#e01818" stroke-width="2.2"/>
<line x1="401.5" y1="858.8" x2="1099" y2="858.8" stroke="#f0f000" stroke-width="2.2"/>
<line x1="401.5" y1="895.2" x2="1099" y2="895.2" stroke="#008a00" stroke-width="1.6"/>
<text x="459.5" y="968" font-size="16" fill="#d9d9d9" text-anchor="middle">100</text>
<text x="575.5" y="968" font-size="16" fill="#d9d9d9" text-anchor="middle">20%</text>
<text x="691.5" y="968" font-size="16" fill="#d9d9d9" text-anchor="middle">40%</text>
<text x="807.5" y="968" font-size="16" fill="#d9d9d9" text-anchor="middle">60%</text>
<text x="923.5" y="968" font-size="16" fill="#d9d9d9" text-anchor="middle">80%</text>
<text x="1039.5" y="968" font-size="16" fill="#d9d9d9" text-anchor="middle">100%</text>
<text x="737" y="673" font-size="16.3" fill="#d9d9d9" text-anchor="middle">DeltaE 2000</text>
<rect x="1348" y="750" width="336" height="204" fill="#000"/>
<rect x="1162" y="137.2" width="745" height="550.3" fill="none" stroke="#8e8e8e" stroke-width="2"/>
<text x="1519.7" y="131" font-size="15.9" fill="#d9d9d9" text-anchor="middle">CIE 1931 xy</text>
<line x1="1155" y1="687.4" x2="1162" y2="687.4" stroke="#d0d0d0" stroke-width="1.5"/>
<text x="1154.5" y="693.9" font-size="16" fill="#d9d9d9" text-anchor="end">0</text>
<line x1="1162.2" y1="687.5" x2="1162.2" y2="694" stroke="#e0e0e0" stroke-width="2"/>
<text x="1162.2" y="711" font-size="16" fill="#d9d9d9" text-anchor="middle">0</text>
<line x1="1155" y1="621.9" x2="1162" y2="621.9" stroke="#d0d0d0" stroke-width="1.5"/>
<text x="1154.5" y="628.4" font-size="16" fill="#d9d9d9" text-anchor="end">0,1</text>
<line x1="1250.9" y1="687.5" x2="1250.9" y2="694" stroke="#e0e0e0" stroke-width="2"/>
<text x="1250.9" y="711" font-size="16" fill="#d9d9d9" text-anchor="middle">0,1</text>
<line x1="1155" y1="556.4" x2="1162" y2="556.4" stroke="#d0d0d0" stroke-width="1.5"/>
<text x="1154.5" y="562.9" font-size="16" fill="#d9d9d9" text-anchor="end">0,2</text>
<line x1="1339.5" y1="687.5" x2="1339.5" y2="694" stroke="#e0e0e0" stroke-width="2"/>
<text x="1339.5" y="711" font-size="16" fill="#d9d9d9" text-anchor="middle">0,2</text>
<line x1="1155" y1="490.9" x2="1162" y2="490.9" stroke="#d0d0d0" stroke-width="1.5"/>
<text x="1154.5" y="497.4" font-size="16" fill="#d9d9d9" text-anchor="end">0,3</text>
<line x1="1428.2" y1="687.5" x2="1428.2" y2="694" stroke="#e0e0e0" stroke-width="2"/>
<text x="1428.2" y="711" font-size="16" fill="#d9d9d9" text-anchor="middle">0,3</text>
<line x1="1155" y1="425.4" x2="1162" y2="425.4" stroke="#d0d0d0" stroke-width="1.5"/>
<text x="1154.5" y="431.9" font-size="16" fill="#d9d9d9" text-anchor="end">0,4</text>
<line x1="1516.8" y1="687.5" x2="1516.8" y2="694" stroke="#e0e0e0" stroke-width="2"/>
<text x="1516.8" y="711" font-size="16" fill="#d9d9d9" text-anchor="middle">0,4</text>
<line x1="1155" y1="359.9" x2="1162" y2="359.9" stroke="#d0d0d0" stroke-width="1.5"/>
<text x="1154.5" y="366.4" font-size="16" fill="#d9d9d9" text-anchor="end">0,5</text>
<line x1="1605.5" y1="687.5" x2="1605.5" y2="694" stroke="#e0e0e0" stroke-width="2"/>
<text x="1605.5" y="711" font-size="16" fill="#d9d9d9" text-anchor="middle">0,5</text>
<line x1="1155" y1="294.5" x2="1162" y2="294.5" stroke="#d0d0d0" stroke-width="1.5"/>
<text x="1154.5" y="301.0" font-size="16" fill="#d9d9d9" text-anchor="end">0,6</text>
<line x1="1694.1" y1="687.5" x2="1694.1" y2="694" stroke="#e0e0e0" stroke-width="2"/>
<text x="1694.1" y="711" font-size="16" fill="#d9d9d9" text-anchor="middle">0,6</text>
<line x1="1155" y1="229.0" x2="1162" y2="229.0" stroke="#d0d0d0" stroke-width="1.5"/>
<text x="1154.5" y="235.5" font-size="16" fill="#d9d9d9" text-anchor="end">0,7</text>
<line x1="1782.8" y1="687.5" x2="1782.8" y2="694" stroke="#e0e0e0" stroke-width="2"/>
<text x="1782.8" y="711" font-size="16" fill="#d9d9d9" text-anchor="middle">0,7</text>
<line x1="1155" y1="163.5" x2="1162" y2="163.5" stroke="#d0d0d0" stroke-width="1.5"/>
<text x="1154.5" y="170.0" font-size="16" fill="#d9d9d9" text-anchor="end">0,8</text>
<line x1="1871.4" y1="687.5" x2="1871.4" y2="694" stroke="#e0e0e0" stroke-width="2"/>
<text x="1871.4" y="711" font-size="16" fill="#d9d9d9" text-anchor="middle">0,8</text>
<rect x="1418.9" y="284.5" width="17" height="17" fill="none" stroke="#fff" stroke-width="1.8"/>
<rect x="1422.0" y="322.7" width="17" height="17" fill="none" stroke="#fff" stroke-width="1.8"/>
<rect x="1423.9" y="356.8" width="17" height="17" fill="none" stroke="#fff" stroke-width="1.8"/>
<rect x="1424.8" y="392.1" width="17" height="17" fill="none" stroke="#fff" stroke-width="1.8"/>
<rect x="1428.4" y="426.5" width="17" height="17" fill="none" stroke="#fff" stroke-width="1.8"/>
<rect x="1525.3" y="346.5" width="17" height="17" fill="none" stroke="#fff" stroke-width="1.8"/>
<rect x="1504.7" y="371.1" width="17" height="17" fill="none" stroke="#fff" stroke-width="1.8"/>
<rect x="1488.0" y="392.4" width="17" height="17" fill="none" stroke="#fff" stroke-width="1.8"/>
<rect x="1469.0" y="414.1" width="17" height="17" fill="none" stroke="#fff" stroke-width="1.8"/>
<rect x="1448.9" y="436.0" width="17" height="17" fill="none" stroke="#fff" stroke-width="1.8"/>
<rect x="1351.9" y="462.5" width="17" height="17" fill="none" stroke="#fff" stroke-width="1.8"/>
<rect x="1367.5" y="462.5" width="17" height="17" fill="none" stroke="#fff" stroke-width="1.8"/>
<rect x="1384.0" y="462.5" width="17" height="17" fill="none" stroke="#fff" stroke-width="1.8"/>
<rect x="1399.5" y="462.5" width="17" height="17" fill="none" stroke="#fff" stroke-width="1.8"/>
<rect x="1414.5" y="462.5" width="17" height="17" fill="none" stroke="#fff" stroke-width="1.8"/>
<rect x="1286.0" y="638.3" width="17" height="17" fill="none" stroke="#fff" stroke-width="1.8"/>
<rect x="1317.0" y="599.9" width="17" height="17" fill="none" stroke="#fff" stroke-width="1.8"/>
<rect x="1345.4" y="565.8" width="17" height="17" fill="none" stroke="#fff" stroke-width="1.8"/>
<rect x="1372.1" y="533.6" width="17" height="17" fill="none" stroke="#fff" stroke-width="1.8"/>
<rect x="1402.1" y="497.4" width="17" height="17" fill="none" stroke="#fff" stroke-width="1.8"/>
<rect x="1438.0" y="576.2" width="17" height="17" fill="none" stroke="#fff" stroke-width="1.8"/>
<rect x="1435.7" y="552.1" width="17" height="17" fill="none" stroke="#fff" stroke-width="1.8"/>
<rect x="1434.7" y="530.2" width="17" height="17" fill="none" stroke="#fff" stroke-width="1.8"/>
<rect x="1432.8" y="509.2" width="17" height="17" fill="none" stroke="#fff" stroke-width="1.8"/>
<rect x="1431.8" y="485.9" width="17" height="17" fill="none" stroke="#fff" stroke-width="1.8"/>
<rect x="1721.0" y="462.3" width="17" height="17" fill="none" stroke="#fff" stroke-width="1.8"/>
<rect x="1657.1" y="462.3" width="17" height="17" fill="none" stroke="#fff" stroke-width="1.8"/>
<rect x="1598.6" y="462.3" width="17" height="17" fill="none" stroke="#fff" stroke-width="1.8"/>
<rect x="1547.1" y="462.3" width="17" height="17" fill="none" stroke="#fff" stroke-width="1.8"/>
<rect x="1486.0" y="462.3" width="17" height="17" fill="none" stroke="#fff" stroke-width="1.8"/>
<rect x="1429.7" y="462.5" width="17" height="17" fill="none" stroke="#000" stroke-width="2.2"/>
<circle cx="1383.9" cy="228.1" r="5.4" fill="#00c000" stroke="#000" stroke-width="1.25"/>
<circle cx="1393" cy="278" r="5.4" fill="#50b050" stroke="#000" stroke-width="1.25"/>
<circle cx="1402.6" cy="317.8" r="5.4" fill="#70b070" stroke="#000" stroke-width="1.25"/>
<circle cx="1415" cy="374.6" r="5.4" fill="#88b088" stroke="#000" stroke-width="1.25"/>
<circle cx="1427.4" cy="427.8" r="5.4" fill="#a0b8a0" stroke="#000" stroke-width="1.25"/>
<circle cx="1540.4" cy="342.7" r="5.4" fill="#c8c000" stroke="#000" stroke-width="1.25"/>
<circle cx="1510.4" cy="380.1" r="5.4" fill="#b8b860" stroke="#000" stroke-width="1.25"/>
<circle cx="1493.2" cy="404" r="5.4" fill="#b8b880" stroke="#000" stroke-width="1.25"/>
<circle cx="1476" cy="423" r="5.4" fill="#b0b088" stroke="#000" stroke-width="1.25"/>
<circle cx="1453.8" cy="448" r="5.4" fill="#b8b8a0" stroke="#000" stroke-width="1.25"/>
<circle cx="1327.6" cy="465.8" r="5.4" fill="#00c0c0" stroke="#000" stroke-width="1.25"/>
<circle cx="1344.4" cy="469" r="5.4" fill="#60c0c0" stroke="#000" stroke-width="1.25"/>
<circle cx="1363.4" cy="469" r="5.4" fill="#78b8b8" stroke="#000" stroke-width="1.25"/>
<circle cx="1393" cy="467.7" r="5.4" fill="#90b8b8" stroke="#000" stroke-width="1.25"/>
<circle cx="1419.7" cy="469" r="5.4" fill="#a8b8b8" stroke="#000" stroke-width="1.25"/>
<circle cx="1290" cy="646.8" r="5.4" fill="#0000c0" stroke="#000" stroke-width="1.25"/>
<circle cx="1327.6" cy="606.9" r="5.4" fill="#4848c0" stroke="#000" stroke-width="1.25"/>
<circle cx="1348.1" cy="578.9" r="5.4" fill="#6060c0" stroke="#000" stroke-width="1.25"/>
<circle cx="1380.2" cy="546" r="5.4" fill="#8080c0" stroke="#000" stroke-width="1.25"/>
<circle cx="1412.1" cy="504.9" r="5.4" fill="#9a9ab8" stroke="#000" stroke-width="1.25"/>
<circle cx="1476" cy="572.7" r="5.4" fill="#c000c0" stroke="#000" stroke-width="1.25"/>
<circle cx="1463.6" cy="550.7" r="5.4" fill="#b050b0" stroke="#000" stroke-width="1.25"/>
<circle cx="1457.5" cy="533" r="5.4" fill="#b870b8" stroke="#000" stroke-width="1.25"/>
<circle cx="1454.1" cy="514.8" r="5.4" fill="#b888b8" stroke="#000" stroke-width="1.25"/>
<circle cx="1446.5" cy="491.6" r="5.4" fill="#b8a0b8" stroke="#000" stroke-width="1.25"/>
<circle cx="1742.6" cy="468.9" r="5.4" fill="#c00000" stroke="#000" stroke-width="1.25"/>
<circle cx="1675.1" cy="471.8" r="5.4" fill="#c04040" stroke="#000" stroke-width="1.25"/>
<circle cx="1623.5" cy="476.6" r="5.4" fill="#b86060" stroke="#000" stroke-width="1.25"/>
<circle cx="1574.7" cy="476.6" r="5.4" fill="#b87070" stroke="#000" stroke-width="1.25"/>
<circle cx="1513.6" cy="473.9" r="5.4" fill="#b89090" stroke="#000" stroke-width="1.25"/>
<circle cx="1441.3" cy="468.1" r="5.3" fill="#fff" stroke="#000" stroke-width="1.4"/>
<path d="M1693.5 137 V339.8 H1908" fill="none" stroke="#333333" stroke-width="3"/>
<rect x="1695.5" y="136.5" width="212" height="201" fill="none" stroke="#9c9c9c" stroke-width="1.6"/>
<rect x="1792.4" y="227.9" width="17" height="17" fill="none" stroke="#fff" stroke-width="2"/>
<circle cx="1835.8" cy="167.6" r="5.3" fill="#c8c000" stroke="#000" stroke-width="1.4"/>
</svg>
<div class="a" style="left:0;top:977px;width:1920px;height:63px;background:linear-gradient(#3a3a3a,#262626 40%,#1e1e1e)"></div>
<div class="a" style="left:1px;top:978px;width:45px;height:61px;border-radius:5px;background:linear-gradient(#a6a6a6,#8a8a8a 40%,#5c5c5c)"></div>
<div class="a" style="left:16px;top:980px;width:15px;height:15px;border-radius:50%;background:linear-gradient(#707070,#9a9a9a)"></div>
<svg class="a" style="left:16px;top:980px" width="15" height="15"><path d="M3 9.5 L12 9.5 L7.5 4.5 Z" fill="#222"/></svg>
<div class="a" style="left:5px;top:1003px;width:37px;height:32px;border-radius:4px;background:#ffff00;border:1px solid #cfcfcf"></div>
<div class="a" style="left:52px;top:978px;width:149px;height:61px;border-radius:5px;background:linear-gradient(#a8a8a8,#8e8e8e 45%,#6a6a6a 70%,#484848)"></div>
<div class="a" style="left:57px;top:983px;width:140px;height:37px;border-radius:4px;background:#bfbfa3;border:1px solid #b4b4a8;box-shadow:inset 0 1px 1px rgba(0,0,0,.25)"></div>
<div class="a" style="left:52px;top:1023px;width:149px;height:14px;font-size:11px;line-height:14px;font-weight:normal;text-align:center;color:#3c3c3c">20%</div>
<div class="a" style="left:204px;top:978px;width:149px;height:61px;border-radius:5px;background:linear-gradient(#a8a8a8,#8e8e8e 45%,#6a6a6a 70%,#484848)"></div>
<div class="a" style="left:209px;top:983px;width:140px;height:37px;border-radius:4px;background:#c1c186;border:1px solid #b4b4a8;box-shadow:inset 0 1px 1px rgba(0,0,0,.25)"></div>
<div class="a" style="left:204px;top:1023px;width:149px;height:14px;font-size:11px;line-height:14px;font-weight:normal;text-align:center;color:#3c3c3c">40%</div>
<div class="a" style="left:356px;top:978px;width:149px;height:61px;border-radius:5px;background:linear-gradient(#a8a8a8,#8e8e8e 45%,#6a6a6a 70%,#484848)"></div>
<div class="a" style="left:361px;top:983px;width:140px;height:37px;border-radius:4px;background:#c1c170;border:1px solid #b4b4a8;box-shadow:inset 0 1px 1px rgba(0,0,0,.25)"></div>
<div class="a" style="left:356px;top:1023px;width:149px;height:14px;font-size:11px;line-height:14px;font-weight:normal;text-align:center;color:#3c3c3c">60%</div>
<div class="a" style="left:508px;top:978px;width:149px;height:61px;border-radius:5px;background:linear-gradient(#a8a8a8,#8e8e8e 45%,#6a6a6a 70%,#484848)"></div>
<div class="a" style="left:513px;top:983px;width:140px;height:37px;border-radius:4px;background:#c0c04c;border:1px solid #b4b4a8;box-shadow:inset 0 1px 1px rgba(0,0,0,.25)"></div>
<div class="a" style="left:508px;top:1023px;width:149px;height:14px;font-size:11px;line-height:14px;font-weight:normal;text-align:center;color:#3c3c3c">80%</div>
<div class="a" style="left:660px;top:978px;width:149px;height:61px;border-radius:5px;background:linear-gradient(#888888,#6e6e6e 45%,#4e4e4e 70%,#3c3c3c)"></div>
<div class="a" style="left:665px;top:983px;width:140px;height:37px;border-radius:4px;background:#c4c200;border:1px solid #b4b4a8;box-shadow:inset 0 1px 1px rgba(0,0,0,.25)"></div>
<div class="a" style="left:660px;top:1023px;width:149px;height:14px;font-size:11px;line-height:14px;font-weight:bold;text-align:center;color:#e0e0e0">100%</div>
<div class="a" style="left:1597px;top:978px;width:48px;height:61px;border-radius:5px;background:#2e2e2e"></div>
<div class="a" style="left:1597px;top:978px;width:48px;height:18px;border-radius:5px 5px 0 0;background:linear-gradient(#b0b0b0,#8c8c8c)"></div>
<div class="a" style="left:1612px;top:979px;width:18px;height:16px;border-radius:50%;background:linear-gradient(#8a8a8a,#a8a8a8)"></div>
<svg class="a" style="left:1612px;top:979px" width="18" height="16"><path d="M4 10 L14 10 L9 5 Z" fill="#333"/></svg>
<div class="a" style="left:1597px;top:997px;width:48px;height:42px;border-radius:0 0 5px 5px;background:linear-gradient(#a8a8a8,#8a8a8a)"></div>
<div class="a" style="left:1605px;top:1002px;width:33px;height:32px;border-radius:5px;border:3px solid #1e1e1e;background:linear-gradient(#b0b0b0 50%,#949494 50%);box-shadow:0 0 0 1px #c8c8c8"></div>
<div class="a" style="left:1614px;top:1011px;width:15px;height:14px;background:linear-gradient(#1a1a1a 50%,#000 50%)"></div>
<div class="a" style="left:1646px;top:978px;width:45px;height:30px;border-radius:5px 0 0 0;background:linear-gradient(#b4b4b4,#8c8c8c)"></div>
<div class="a" style="left:1659.0px;top:983px;width:20px;height:20px;border-radius:50%;background:linear-gradient(#8c8c8c,#b0b0b0)"></div>
<div class="a" style="left:1692px;top:978px;width:44px;height:30px;border-radius:0;background:linear-gradient(#b4b4b4,#8c8c8c)"></div>
<div class="a" style="left:1704.5px;top:983px;width:20px;height:20px;border-radius:50%;background:linear-gradient(#8c8c8c,#b0b0b0)"></div>
<div class="a" style="left:1737px;top:978px;width:44px;height:30px;border-radius:0;background:linear-gradient(#b4b4b4,#8c8c8c)"></div>
<div class="a" style="left:1749.5px;top:983px;width:20px;height:20px;border-radius:50%;background:linear-gradient(#8c8c8c,#b0b0b0)"></div>
<div class="a" style="left:1782px;top:978px;width:44.5px;height:30px;border-radius:0;background:linear-gradient(#b4b4b4,#8c8c8c)"></div>
<div class="a" style="left:1794.8px;top:983px;width:20px;height:20px;border-radius:50%;background:linear-gradient(#8c8c8c,#b0b0b0)"></div>
<div class="a" style="left:1827.5px;top:978px;width:44.0px;height:30px;border-radius:0;background:linear-gradient(#3a3a3a,#2a2a2a)"></div>
<div class="a" style="left:1840.0px;top:983px;width:20px;height:20px;border-radius:50%;background:#262626"></div>
<div class="a" style="left:1872.5px;top:978px;width:46.5px;height:30px;border-radius:0;background:linear-gradient(#3a3a3a,#2a2a2a)"></div>
<div class="a" style="left:1886.2px;top:983px;width:20px;height:20px;border-radius:50%;background:#262626"></div>
<div class="a" style="left:1664px;top:989px;width:8px;height:8px;background:#222"></div>
<svg class="a" style="left:1705px;top:983px" width="20" height="20"><path d="M7 5.5 L14.5 10 L7 14.5 Z" fill="#222"/></svg>
<svg class="a" style="left:1750px;top:983px" width="20" height="20"><path d="M6 5 H4.5 V15 H6 M14 5 H15.5 V15 H14" fill="none" stroke="#222" stroke-width="1.6"/><circle cx="8.5" cy="10" r=".9" fill="#222"/><circle cx="11.5" cy="10" r=".9" fill="#222"/></svg>
<svg class="a" style="left:1795px;top:983px" width="20" height="20"><path d="M10 10 C8 7 4.5 7 4.5 10 C4.5 13 8 13 10 10 C12 7 15.5 7 15.5 10 C15.5 13 12 13 10 10Z" fill="none" stroke="#222" stroke-width="1.6"/></svg>
<svg class="a" style="left:1840px;top:983px" width="20" height="20"><path d="M14 8 A4.5 4.5 0 0 0 6 8.5 M6 12 A4.5 4.5 0 0 0 14 11.5" fill="none" stroke="#111" stroke-width="1.8"/></svg>
<div class="a" style="left:1646px;top:1009px;width:135px;height:30px;background:linear-gradient(#b8b8b8,#8a8a8a)"></div>
<div class="a" style="left:1782px;top:1009px;width:137px;height:30px;border-radius:0 5px 5px 0;background:linear-gradient(#b8b8b8,#8a8a8a)"></div>
<div class="a" style="left:1667px;top:1014px;width:20px;height:20px;border-radius:50%;background:linear-gradient(#8c8c8c,#b0b0b0)"></div>
<div class="a" style="left:1880px;top:1014px;width:20px;height:20px;border-radius:50%;background:linear-gradient(#8c8c8c,#b0b0b0)"></div>
<svg class="a" style="left:1667px;top:1014px" width="20" height="20"><path d="M10 5.5 L5.5 10 L10 14.5 M14.5 5.5 L10 10 L14.5 14.5" fill="none" stroke="#333" stroke-width="1.6"/></svg>
<svg class="a" style="left:1880px;top:1014px" width="20" height="20"><path d="M5.5 5.5 L10 10 L5.5 14.5 M10 5.5 L14.5 10 L10 14.5" fill="none" stroke="#333" stroke-width="1.6"/></svg>
<div class="a" style="left:1703px;top:1009px;height:30px;font-size:23px;line-height:32px;color:#2a2a2a;white-space:nowrap">Back</div>
<div class="a" style="left:1809px;top:1009px;height:30px;font-size:23.5px;line-height:32px;color:#2a2a2a;white-space:nowrap">Next</div>
<div class="a" style="left:0;top:1040px;width:1920px;height:8px;background:linear-gradient(100deg,#2b6d9b 0,#2b6d9b 59%,#2f8cb6 60%,#2f8cb6 100%)"></div>
<div class="a" style="left:300px;top:1041px;width:58px;height:7px;background:#7aa4c4;border:1px solid #a8c8e0;border-bottom:none"></div>
<div class="a" style="left:252px;top:1044px;width:30px;height:4px;background:#00a000"></div>
<div class="a" style="left:196px;top:1043px;width:22px;height:5px;border-radius:11px 11px 0 0;background:#3aa0e0"></div>
<script>
(function(){
var OX=1160, OY=134;
function sm(a,b,t){t=(t-a)/(b-a); if(t<0)t=0; if(t>1)t=1; return t*t*(3-2*t);}
function color(x,y,out){
  if(y<0.002) y=0.002;
  var X=x/y, Z=(1-x-y)/y;
  var r=3.2406*X-1.5372-0.4986*Z;
  var g=-0.9689*X+1.8758+0.0415*Z;
  var b=0.0557*X-0.2040+1.0570*Z;
  if(r<0)r=0; if(g<0)g=0; if(b<0)b=0;
  var m=Math.max(r,g,b); if(m<=0) m=1;
  r/=m; g/=m; b/=m;
  var D=(1-0.34*sm(0.45,0.65,x))*(1-0.28*sm(0.6,0.83,y));
  out[0]=r*D; out[1]=g*D; out[2]=b*D;
}
var P=[[1799.8,503.4],[1700,429.3],[1600,355.5],[1500,281.8],[1451.7,247.5],[1410,221.5],[1368.3,198],[1326.7,176.6],[1285,160],[1265,155.2],[1249.6,152.5],[1236,151.8],[1225.8,152],[1217,153.6],[1211.2,156.6],[1205,161.5],[1199.1,167.3],[1193.5,174.5],[1188.2,183],[1183,192],[1178.8,201.8],[1175.3,211.5],[1172.5,222.1],[1170.3,233.5],[1168.6,245.6],[1167.3,257],[1166.3,269],[1165.7,281],[1165.6,292.6],[1166.2,304],[1167.2,316],[1168.6,330],[1170.8,347],[1173.7,364.4],[1178.3,385],[1184,405.6],[1190.6,426],[1197.8,446.8],[1211.5,488],[1228.7,529.3],[1249.3,570.5],[1270,608.4],[1290.6,639.3],[1302.6,661],[1311.2,671.5],[1320,674.2],[1329,672.5]];
function locus(ctx,ox,oy){
  ctx.beginPath();
  ctx.moveTo(P[0][0]-ox,P[0][1]-oy);
  for(var i=0;i<P.length-1;i++){
    var p0=P[Math.max(0,i-1)], p1=P[i], p2=P[i+1], p3=P[Math.min(P.length-1,i+2)];
    if(i==0){p0=p1;}
    ctx.bezierCurveTo(p1[0]+(p2[0]-p0[0])/6-ox, p1[1]+(p2[1]-p0[1])/6-oy, p2[0]-(p3[0]-p1[0])/6-ox, p2[1]-(p3[1]-p1[1])/6-oy, p2[0]-ox, p2[1]-oy);
  }
  ctx.closePath();
}
function render(cv, ox, oy, mapx, mapy, dimf, clipLocus, triPts){
  var W=cv.width,H=cv.height, ctx=cv.getContext('2d');
  var ob=document.createElement('canvas'); ob.width=W; ob.height=H;
  var od=document.createElement('canvas'); od.width=W; od.height=H;
  var ib=ob.getContext('2d').createImageData(W,H), id=od.getContext('2d').createImageData(W,H);
  var c=[0,0,0];
  for(var py=0;py<H;py++){
    var yy=mapy(py+oy+0.5);
    for(var px=0;px<W;px++){
      var xx=mapx(px+ox+0.5);
      color(xx,yy,c);
      var k=(py*W+px)*4;
      ib.data[k]=c[0]*255; ib.data[k+1]=c[1]*255; ib.data[k+2]=c[2]*255; ib.data[k+3]=255;
      id.data[k]=c[0]*255*dimf; id.data[k+1]=c[1]*255*dimf; id.data[k+2]=c[2]*255*dimf; id.data[k+3]=255;
    }
  }
  ob.getContext('2d').putImageData(ib,0,0);
  od.getContext('2d').putImageData(id,0,0);
  ctx.save();
  if(clipLocus){ locus(ctx,ox,oy); ctx.clip(); }
  ctx.drawImage(od,0,0);
  ctx.restore();
  ctx.save();
  ctx.beginPath(); ctx.moveTo(triPts[0][0]-ox,triPts[0][1]-oy); ctx.lineTo(triPts[1][0]-ox,triPts[1][1]-oy); ctx.lineTo(triPts[2][0]-ox,triPts[2][1]-oy); ctx.closePath(); ctx.clip();
  ctx.drawImage(ob,0,0);
  ctx.restore();
}
function SX(x){return 1162.2+886.5*x;} function SY(y){return 687.4-654.9*y;}
var cv=document.getElementById('cie');
var ctx=cv.getContext('2d'); ctx.fillStyle='#232323'; ctx.fillRect(0,0,cv.width,cv.height);
render(cv,OX,OY,function(p){return (p-1162.2)/886.5;},function(p){return (687.4-p)/654.9;},0.55,true,[[SX(0.64),SY(0.33)],[SX(0.30),SY(0.60)],[SX(0.15),SY(0.06)]]);
var ci=document.getElementById('cin');
function IX(x){return 1801.4+(x-0.4193)*4100;} function IY(y){return 236.9-(y-0.5053)*3950;}
render(ci,1696,137,function(p){return 0.4193+(p-1801.4)/4100;},function(p){return 0.5053-(p-236.9)/3950;},0.6,false,[[IX(0.64),IY(0.33)],[IX(0.30),IY(0.60)],[IX(0.15),IY(0.06)]]);
})();
</script>
</body></html>
